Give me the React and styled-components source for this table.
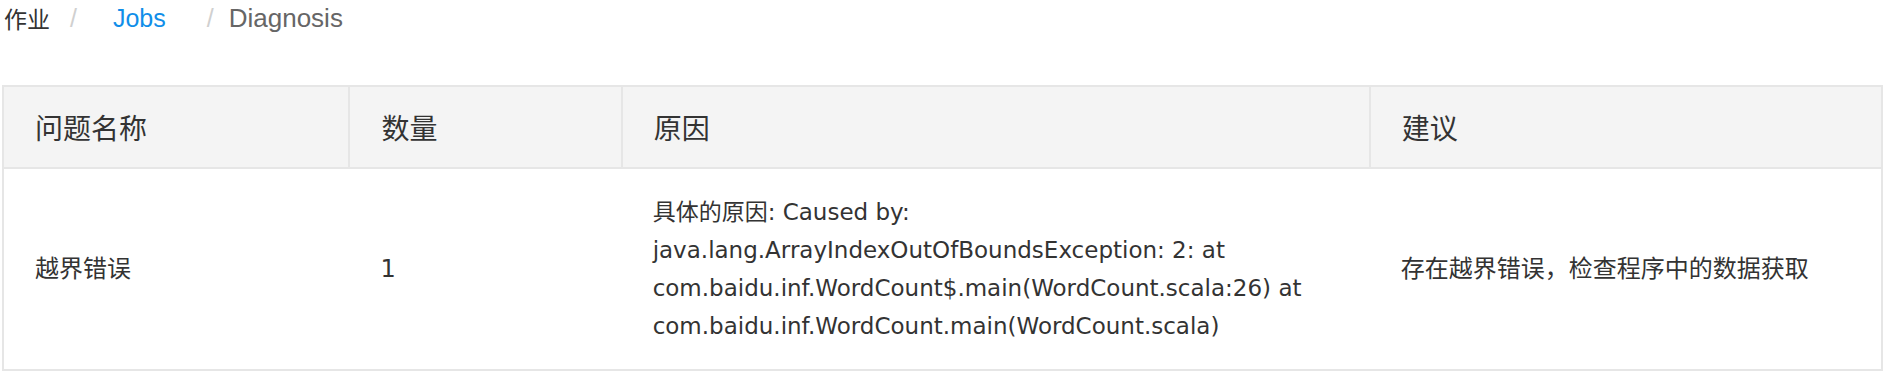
import React from "react";
import styled, { createGlobalStyle } from "styled-components";

const GlobalStyle = createGlobalStyle`
    html, body {
        margin: 0;
        padding: 0;
        background: #fff;
    }
    body {
        font-family: "Liberation Sans", "Noto Sans CJK SC", sans-serif;
        color: #333;
    }
`;

const Page = styled.div`
    padding: 0 8px 0 2px;
`;

const Breadcrumb = styled.nav`
    display: flex;
    align-items: center;
    height: 36px;
    padding-left: 2px;
    font-size: 25px;
    font-family: "Liberation Sans", "Noto Sans CJK SC", sans-serif;
`;

const Crumb = styled.span`
    color: ${(props) => props.color || "#333"};
    padding: 0 ${(props) => props.pad || 0}px;
    font-size: ${(props) => props.size || 25}px;
`;

const Sep = styled.span`
    color: #d0d0d0;
    padding: 0 15px 0 20px;
`;

const Table = styled.table`
    margin-top: 49px;
    width: 1881px;
    border-collapse: collapse;
    table-layout: fixed;
    border: 2px solid #e6e6e6;
`;

const Th = styled.th`
    height: 80px;
    padding: 0 31px;
    text-align: left;
    font-weight: normal;
    font-size: 28px;
    font-family: "Noto Sans CJK SC", sans-serif;
    color: #333;
    background: #f4f4f4;
    border: 2px solid #e6e6e6;
`;

const Td = styled.td`
    height: 200px;
    padding: 0 31px;
    vertical-align: middle;
    font-size: 24px;
    line-height: 38px;
    font-family: "DejaVu Sans", "Noto Sans CJK SC", sans-serif;
    color: #333;
    border: 2px solid #e6e6e6;
    border-left: none;
    border-right: none;
`;

const Reason = styled.div`
    font-size: 23px;
    word-break: break-word;
`;

const columns = [
    { title: "问题名称", width: 345 },
    { title: "数量", width: 271 },
    { title: "原因", width: 745 },
    { title: "建议", width: 510 },
];

const rows = [
    {
        name: "越界错误",
        count: 1,
        reason: [
            "具体的原因: Caused by:",
            "java.lang.ArrayIndexOutOfBoundsException: 2: at",
            "com.baidu.inf.WordCount$.main(WordCount.scala:26) at",
            "com.baidu.inf.WordCount.main(WordCount.scala)",
        ],
        advice: "存在越界错误，检查程序中的数据获取",
    },
];

const App = () => (
    <Page>
        <GlobalStyle />
        <Breadcrumb>
            <Crumb size={23}>作业</Crumb>
            <Sep>/</Sep>
            <Crumb color="#108ee9" pad={21} size={25}>
                Jobs
            </Crumb>
            <Sep>/</Sep>
            <Crumb color="#666" size={26}>
                Diagnosis
            </Crumb>
        </Breadcrumb>
        <Table>
            <colgroup>
                {columns.map((c) => (
                    <col key={c.title} style={{ width: c.width }} />
                ))}
            </colgroup>
            <thead>
                <tr>
                    {columns.map((c) => (
                        <Th key={c.title}>{c.title}</Th>
                    ))}
                </tr>
            </thead>
            <tbody>
                {rows.map((r) => (
                    <tr key={r.name}>
                        <Td>{r.name}</Td>
                        <Td>{r.count}</Td>
                        <Td>
                            <Reason>
                                {r.reason.map((line) => (
                                    <div key={line}>{line}</div>
                                ))}
                            </Reason>
                        </Td>
                        <Td>{r.advice}</Td>
                    </tr>
                ))}
            </tbody>
        </Table>
    </Page>
);

export default App;
